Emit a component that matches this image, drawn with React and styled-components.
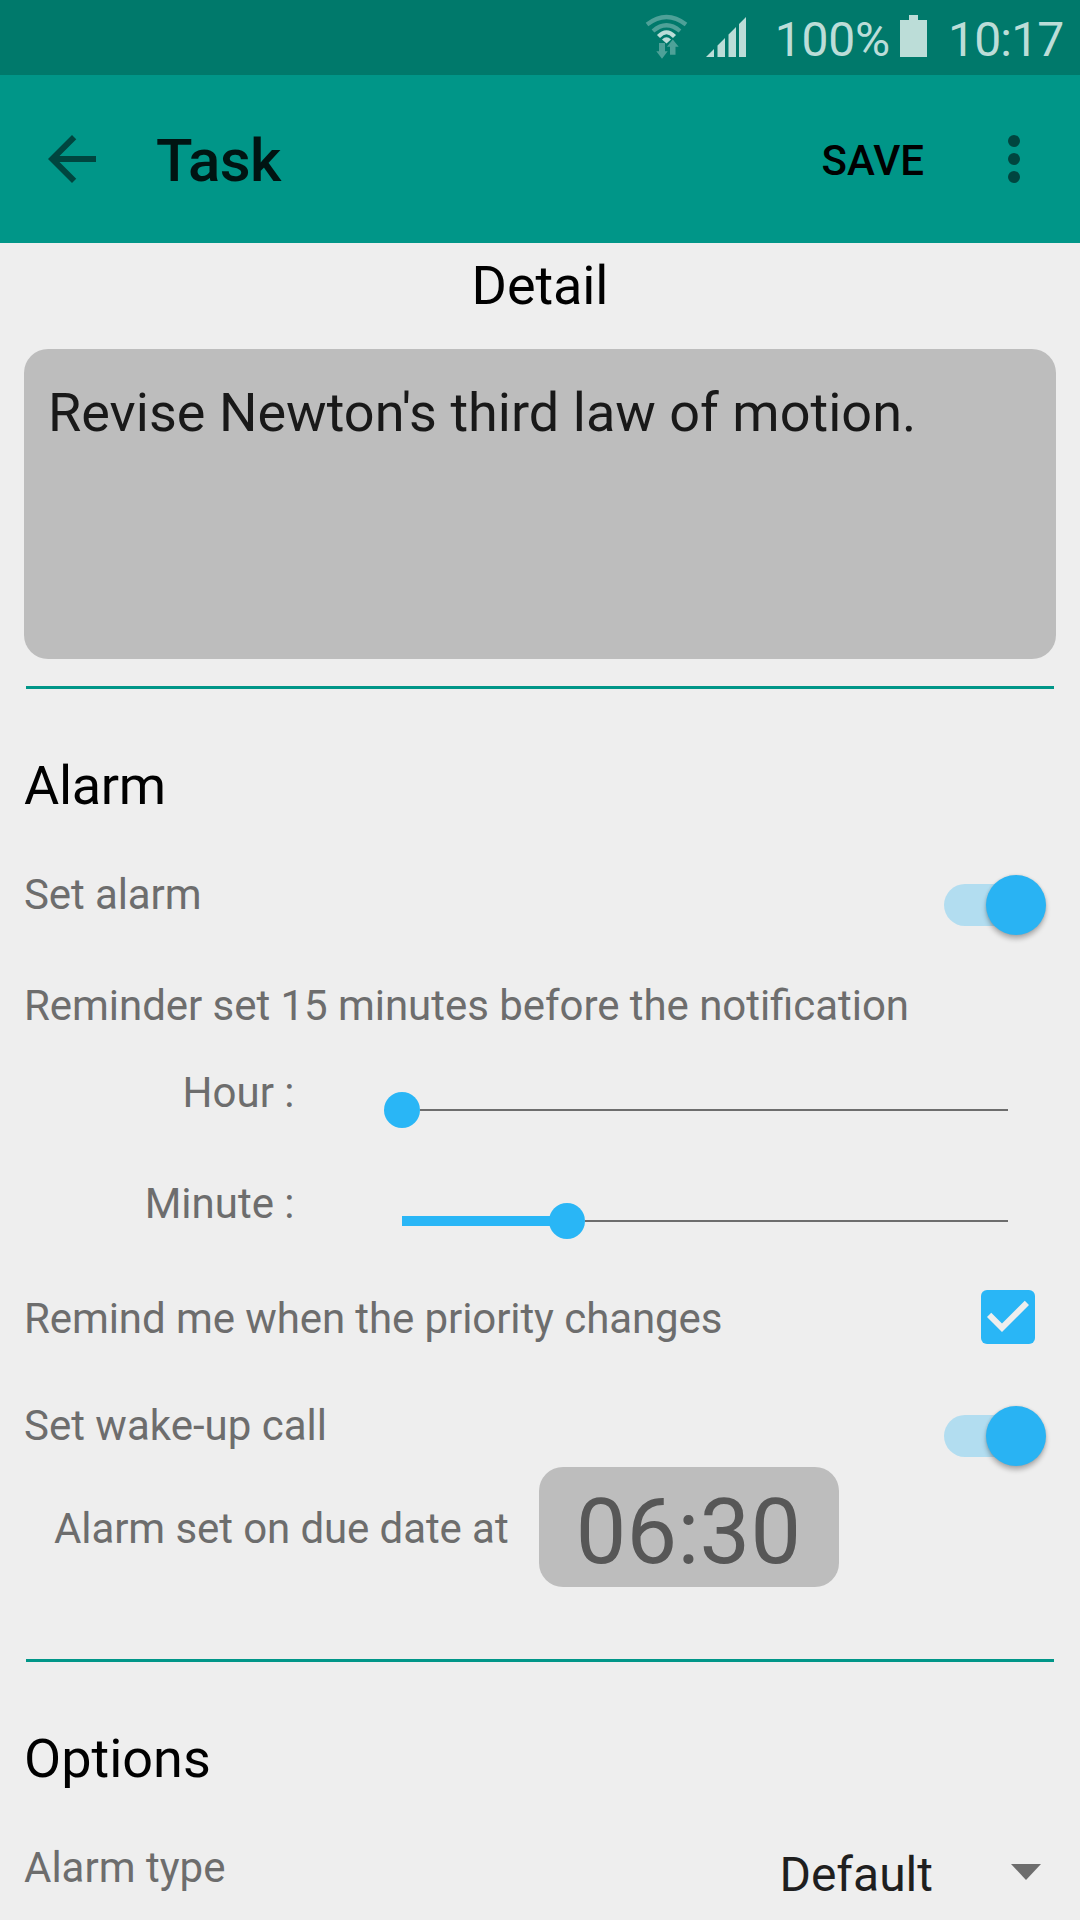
import React from "react";
import styled, { createGlobalStyle } from "styled-components";

const GlobalStyle = createGlobalStyle`
  * { box-sizing: border-box; }
  html, body { margin: 0; padding: 0; background: #eeeeee; }
  body { font-family: Roboto, "Noto Sans", sans-serif; overflow: hidden; }
`;

const Screen = styled.div`
  width: 1080px;
  height: 1920px;
  overflow: hidden;
  background: #eeeeee;
  color: #000;
`;

const StatusBar = styled.header`
  height: 75px;
  padding: 10px 16.5px 0 0;
  display: flex;
  justify-content: flex-end;
  align-items: flex-start;
  background: #00796b;
  color: #bcddd8;

  svg { display: block; flex: none; }
`;

const StatusText = styled.span`
  font-size: 48px;
  line-height: 60px;
  letter-spacing: ${(p) => p.$spacing || 0}px;
  white-space: nowrap;
  margin-left: ${(p) => p.$gap || 0}px;
`;

const BatteryIcon = styled.svg`
  margin: 5px 0 0 10px;
`;

const Toolbar = styled.nav`
  height: 168px;
  padding: 48px 30px 0 36px;
  display: flex;
  align-items: flex-start;
  background: #009688;

  svg { display: block; flex: none; }
`;

const Title = styled.h1`
  flex: 1;
  margin: 0 0 0 48px;
  font-size: 60px;
  line-height: 76px;
  font-weight: 500;
  letter-spacing: -0.6px;
  color: #001412;
`;

const SaveButton = styled.button`
  margin: 0 54px 0 0;
  padding: 0;
  border: 0;
  background: none;
  font: 500 42px/76px Roboto, sans-serif;
  color: #000;
`;

const Content = styled.main`
  padding: 0 24px;
`;

const Heading = styled.h2`
  margin: 0;
  height: ${(p) => (p.$centered ? 106 : 161)}px;
  padding-top: ${(p) => (p.$centered ? 11 : 65)}px;
  text-align: ${(p) => (p.$centered ? "center" : "left")};
  font-size: 54px;
  line-height: 64px;
  font-weight: 400;
  letter-spacing: ${(p) => p.$spacing || 0}px;
`;

const Note = styled.div`
  height: 310px;
  padding: 32px 24px;
  border-radius: 24px;
  background: #bdbdbd;
  color: #191919;
  font-size: 54px;
  line-height: 64px;
  letter-spacing: 0.02px;
  white-space: nowrap;
`;

const Divider = styled.hr`
  height: 3px;
  margin: ${(p) => p.$top || 0}px 2px 0;
  border: 0;
  background: #009688;
`;

const Row = styled.div`
  display: flex;
  align-items: flex-start;
  justify-content: ${(p) => (p.$start ? "flex-start" : "space-between")};
  height: ${(p) => p.$height}px;
  padding-left: ${(p) => p.$indent || 0}px;
  padding-right: ${(p) => p.$right || 0}px;
`;

const Label = styled.span`
  flex: none;
  width: ${(p) => (p.$width ? `${p.$width}px` : "auto")};
  text-align: ${(p) => (p.$width ? "right" : "left")};
  padding-top: ${(p) => p.$top}px;
  font-size: 42px;
  line-height: 50px;
  letter-spacing: ${(p) => p.$spacing || 0}px;
  font-feature-settings: "liga" 1;
  color: #6d6d6d;
  white-space: nowrap;
`;

const Track = styled.div`
  display: flex;
  align-items: center;
  justify-content: flex-end;
  width: 86px;
  height: 42px;
  margin-top: 34px;
  border-radius: 21px;
  background: #b2ddf0;
`;

const Thumb = styled.div`
  flex: none;
  width: 60px;
  height: 60px;
  margin-right: -15.5px;
  margin-top: -1px;
  border-radius: 50%;
  background: #29b3f3;
  box-shadow: 0 4px 5px rgba(0, 0, 0, 0.26), 0 0 3px rgba(0, 0, 0, 0.12);
`;

const SliderBox = styled.div`
  display: flex;
  align-items: center;
  width: 606px;
  height: 36px;
  margin-top: 37px;
`;

const Filled = styled.div`
  height: 10px;
  margin-right: -18px;
  background: #29b6f6;
`;

const Knob = styled.div`
  flex: none;
  width: 36px;
  height: 36px;
  border-radius: 50%;
  background: #29b6f6;
`;

const Rest = styled.div`
  flex: 1;
  height: 2px;
  background: #6d6d6d;
`;

const Checkbox = styled.div`
  width: 54px;
  height: 54px;
  margin-top: 13px;
  border-radius: 6px;
  background: #29b6f6;

  svg { display: block; }
`;

const TimeChip = styled.div`
  width: 300px;
  height: 120px;
  margin-left: auto;
  padding-top: 6px;
  border-radius: 24px;
  background: #bdbdbd;
  color: #575757;
  font-size: 90px;
  line-height: 120px;
  letter-spacing: 0.3px;
  text-indent: -1px;
  text-align: center;
`;

const Select = styled.div`
  display: flex;
  align-items: flex-start;
  gap: 78px;
  padding-top: 22px;
  font-size: 48px;
  line-height: 60px;
  color: #1f1f1f;
`;

const Caret = styled.svg`
  display: block;
  margin-top: 19px;
`;

function Switch() {
  return (
    <Track role="switch" aria-checked="true">
      <Thumb />
    </Track>
  );
}

function Slider({ value, max }) {
  const filled = (value / max) * 606;
  return (
    <SliderBox>
      <Filled style={{ width: filled }} />
      <Knob />
      <Rest />
    </SliderBox>
  );
}

export default function App() {
  return (
    <Screen>
      <GlobalStyle />
      <StatusBar>
        <svg width="110" height="56" viewBox="640 10 110 56" fill="none">
          <g stroke="#4ea198" strokeWidth="4.2">
            <path d="M647 24.500Q666.500 9.500 686 24.500" />
            <path d="M653 31Q666.500 19.500 680 31" />
          </g>
          <path d="M658.500 36.500Q666.500 28 674.500 36.500" stroke="#bcddd8" strokeWidth="4.2" />
          <path d="M662 39.500Q666.500 35 671 39.500L666.500 43.500Z" fill="#bcddd8" />
          <g fill="#4ea198">
            <path d="M659 43h6v8.300h2.700l-5.700 7.500-5.700-7.500h2.700z" />
            <path d="M670 54.700h5.500v-8h3.200l-5.900-7.200-5.900 7.200h3.100z" />
          </g>
          <path
            fill="#bcddd8"
            d="M706 57l8-8v8zM717.500 57V45.500l7.500-7.500v19zM728.500 57V34.500l7.500-7.500v30zM739 57V24l7-7v40z"
          />
        </svg>
        <StatusText $gap={25} $spacing={-0.25}>100%</StatusText>
        <BatteryIcon width="27" height="42" viewBox="0 0 27 42" fill="#bcddd8">
          <path d="M9 0h9v5h9v37H0V5h9z" />
        </BatteryIcon>
        <StatusText $gap={21} $spacing={-0.8}>10:17</StatusText>
      </StatusBar>

      <Toolbar>
        <svg width="72" height="72" viewBox="0 0 24 24" fill="#00453f">
          <path d="M20 11H7.830l5.590-5.590L12 4l-8 8 8 8 1.410-1.410L7.830 13H20v-2z" />
        </svg>
        <Title>Task</Title>
        <SaveButton>SAVE</SaveButton>
        <svg width="72" height="72" viewBox="0 0 24 24" fill="#00453f">
          <circle cx="12" cy="6" r="2" />
          <circle cx="12" cy="12" r="2" />
          <circle cx="12" cy="18" r="2" />
        </svg>
      </Toolbar>

      <Content>
        <Heading $centered $spacing={-0.1}>Detail</Heading>
        <Note>Revise Newton's third law of motion.</Note>
        <Divider $top={27} />

        <Heading $spacing={-0.3}>Alarm</Heading>
        <Row $height={130} $right={26}>
          <Label $top={20} $spacing={-0.1}>Set alarm</Label>
          <Switch />
        </Row>
        <Row $height={75}>
          <Label $top={1} $spacing={-0.045}>
            Reminder set 15 minutes before the notification
          </Label>
        </Row>
        <Row $height={111} $right={48}>
          <Label $top={13} $width={270.5}>Hour :</Label>
          <Slider value={0} max={55} />
        </Row>
        <Row $height={111} $right={48}>
          <Label $top={13} $width={270.5}>Minute :</Label>
          <Slider value={15} max={55} />
        </Row>
        <Row $height={104} $right={21}>
          <Label $top={17} $spacing={-0.085}>Remind me when the priority changes</Label>
          <Checkbox role="checkbox" aria-checked="true">
            <svg width="54" height="54" viewBox="3 3 18 18" fill="#eeeeee">
              <path d="M10 17l-5-5 1.410-1.410L10 14.170l7.590-7.590L19 8z" />
            </svg>
          </Checkbox>
        </Row>
        <Row $height={86} $right={26}>
          <Label $top={20}>Set wake-up call</Label>
          <Switch />
        </Row>
        <Row $height={192} $indent={30} $right={217} $start>
          <Label $top={37} $spacing={-0.09}>Alarm set on due date at</Label>
          <TimeChip>06:30</TimeChip>
        </Row>
        <Divider />

        <Heading>Options</Heading>
        <Row $height={97} $right={15}>
          <Label $top={20}>Alarm type</Label>
          <Select>
            <span>Default</span>
            <Caret width="30" height="16" viewBox="0 0 30 16" fill="#6d6d6d">
              <path d="M0 0h30L15 16z" />
            </Caret>
          </Select>
        </Row>
      </Content>
    </Screen>
  );
}
